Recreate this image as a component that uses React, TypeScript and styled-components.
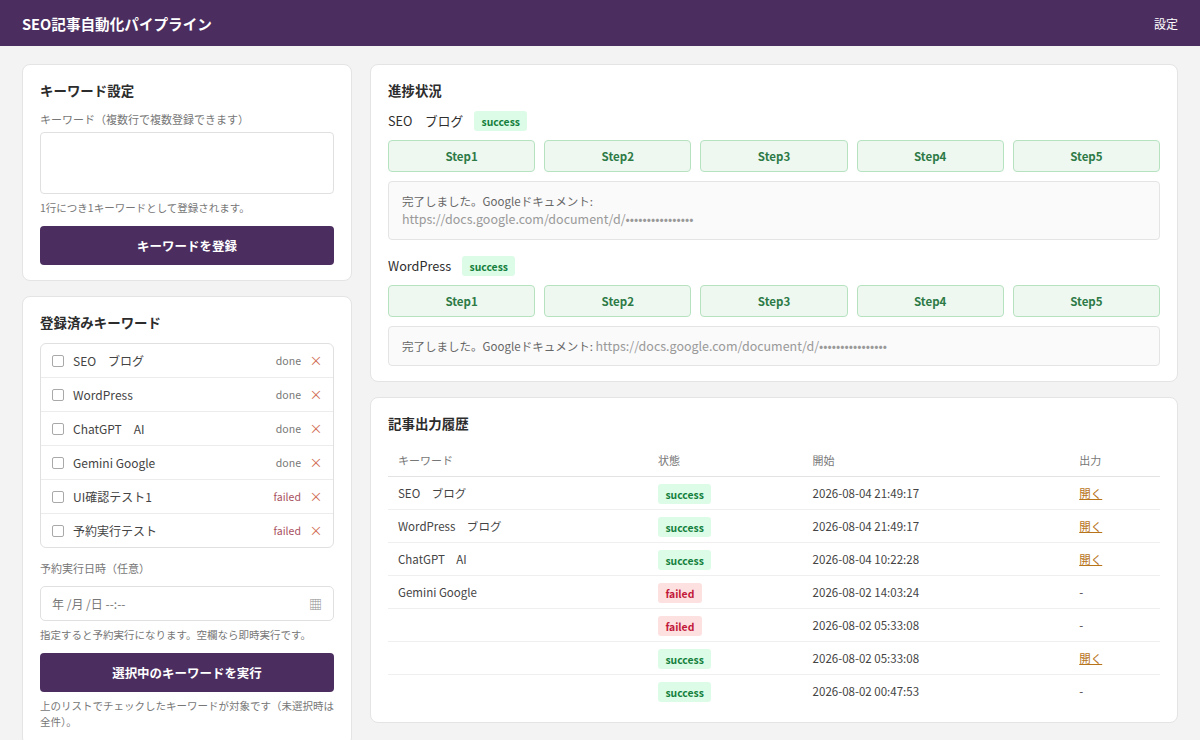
import React from "react";
import styled, { createGlobalStyle } from "styled-components";

const Global = createGlobalStyle`
  html, body { margin: 0; padding: 0; height: 740px; overflow: hidden; background: #f3f3f3; }
  body { font-family: "Noto Sans CJK JP", "Noto Sans", sans-serif; font-size: 12px; color: #333; }
  * { box-sizing: border-box; }
`;

const Header = styled.header`
  height: 46px; background: #4b2e5f; color: #fff; display: flex; align-items: center;
  justify-content: space-between; padding: 0 22px;
`;
const Brand = styled.div`font-size: 14.6px; font-weight: 700;`;
const Settings = styled.a`font-size: 12px; color: #fff;`;
const Layout = styled.main`
  display: grid; grid-template-columns: 330px 808px; gap: 18px; padding: 18px 22px 0; align-items: start;
`;
const Column = styled.div`display: flex; flex-direction: column; gap: 15px;`;
const Card = styled.section`
  background: #fff; border: 1px solid #e4e4e4; border-radius: 8px; padding: 16px 17px 15px;
`;
const Title = styled.h2`margin: 0 0 11px; font-size: 13.44px; line-height: 19px; font-weight: 700; color: #2c2c2c;`;
const Label = styled.div`font-size: 11px; line-height: 16px; color: #777; margin-bottom: 5px;`;
const TextArea = styled.textarea`
  display: block; width: 100%; height: 62px; border: 1px solid #e0e0e0; border-radius: 4px; resize: none; outline: none;
`;
const Help = styled.p`margin: 6px 0 10px; font-size: 10.5px; line-height: 16px; color: #777;`;
const Foot = styled(Help)`margin: 6px 0 0;`;
const Primary = styled.button`
  display: block; width: 100%; height: 39px; border: 0; border-radius: 4px; background: #4b2e5f; color: #fff;
  font: 700 12.48px "Noto Sans CJK JP", sans-serif;
`;
const KeywordList = styled.div`border: 1px solid #e0e0e0; border-radius: 6px; margin-bottom: 12px;`;
const KeywordRow = styled.div`
  height: 34px; display: flex; align-items: center; padding: 0 12px 0 11px; border-top: 1px solid #ececec;
  &:first-child { border-top: 0; height: 33px; }
`;
const Check = styled.input.attrs({ type: "checkbox" })`
  appearance: none; width: 12px; height: 12px; margin: 0 9px 0 0; border: 1px solid #a9a9a9; border-radius: 2px; background: #fff;
`;
const KeywordName = styled.span`flex: 1; color: #444;`;
const KeywordState = styled.span<{ $failed?: boolean }>`
  font-size: 10.56px; color: ${(p) => (p.$failed ? "#a8505e" : "#777")}; margin-right: 10px;
`;
const Remove = styled.button`
  display: flex; align-items: center; justify-content: center; border: 0; background: none; padding: 0 0 2px;
  color: #d0694f; width: 10px; height: 16px; font: 400 13px/14px "Noto Sans CJK JP", sans-serif;
`;
const DateField = styled.div`
  height: 35px; border: 1px solid #e0e0e0; border-radius: 5px; padding: 0 11px 0 11px; display: flex; align-items: center;
  justify-content: space-between; color: #777; font-size: 12px; margin-top: 10px;
`;
const CalendarGlyph = styled.span`font-size: 13px; line-height: 16px; color: #8f8f8f;`;
const StatusLine = styled.div`display: flex; align-items: center; gap: 11px; margin-bottom: 9px; font-size: 12.68px; line-height: 20px; color: #2e2e2e;`;
const Badge = styled.span<{ $failed?: boolean }>`
  display: inline-block; height: 20px; padding: 0 7.4px; border-radius: 3px; font-size: 10.4px; line-height: 21px; font-weight: 700;
  background: ${(p) => (p.$failed ? "#fde1e1" : "#dcfce7")}; color: ${(p) => (p.$failed ? "#c2183a" : "#15803d")};
`;
const Steps = styled.div`display: grid; grid-template-columns: repeat(5, 1fr); gap: 9px; margin-bottom: 9px;`;
const Step = styled.div`
  height: 32px; border: 1px solid #b7e2c0; border-radius: 4px; background: #eef8f1; color: #2d7a46;
  display: flex; align-items: center; justify-content: center; font-size: 11.52px; font-weight: 700;
`;
const Result = styled.div`
  border: 1px solid #e4e4e4; border-radius: 4px; background: #fafafa; padding: 9.8px 13px 8.4px; line-height: 1.6; font-size: 11.52px; color: #666;
  margin-bottom: 16.4px;
  &:last-child { margin-bottom: 0; }
`;
const Url = styled.span`color: #999; font-size: 12.48px;`;
const HistoryTable = styled.table`width: 100%; border-collapse: collapse; table-layout: fixed;`;
const Th = styled.th<{ $w?: number }>`
  width: ${(p) => (p.$w ? `${p.$w}px` : "auto")}; height: 32px; padding: 1px 10px 0; text-align: left; font-size: 11px; font-weight: 400;
  color: #777; border-bottom: 1px solid #e3e3e3;
`;
const Td = styled.td`height: 33px; padding: 0 10px; color: #444; font-size: 11.52px; border-bottom: 1px solid #efefef;`;
const StatusCell = styled(Td)`padding-top: 2px;`;
const LastRow = styled.tr`&:last-child td { border-bottom: 0; }`;
const OpenLink = styled.a`color: #b8741a; text-decoration: underline;`;

const keywords: [string, string][] = [
  ["SEO　ブログ", "done"], ["WordPress", "done"], ["ChatGPT　AI", "done"],
  ["Gemini Google", "done"], ["UI確認テスト1", "failed"], ["予約実行テスト", "failed"],
];
const history: [string, string, string, boolean][] = [
  ["SEO　ブログ", "success", "2026-08-04 21:49:17", true],
  ["WordPress　ブログ", "success", "2026-08-04 21:49:17", true],
  ["ChatGPT　AI", "success", "2026-08-04 10:22:28", true],
  ["Gemini Google", "failed", "2026-08-02 14:03:24", false],
  ["", "failed", "2026-08-02 05:33:08", false],
  ["", "success", "2026-08-02 05:33:08", true],
  ["", "success", "2026-08-02 00:47:53", false],
];
const StepRow = () => (
  <Steps>{[1, 2, 3, 4, 5].map((n) => <Step key={n}>Step{n}</Step>)}</Steps>
);
const URL_TEXT = "https://docs.google.com/document/d/••••••••••••••••";

export default function App() {
  return (
    <>
      <Global />
      <Header><Brand>SEO記事自動化パイプライン</Brand><Settings>設定</Settings></Header>
      <Layout>
        <Column>
          <Card>
            <Title>キーワード設定</Title>
            <Label>キーワード（複数行で複数登録できます）</Label>
            <TextArea />
            <Help>1行につき1キーワードとして登録されます。</Help>
            <Primary>キーワードを登録</Primary>
          </Card>
          <Card>
            <Title>登録済みキーワード</Title>
            <KeywordList>
              {keywords.map(([k, s]) => (
                <KeywordRow key={k}>
                  <Check />
                  <KeywordName>{k}</KeywordName>
                  <KeywordState $failed={s === "failed"}>{s}</KeywordState>
                  <Remove>×</Remove>
                </KeywordRow>
              ))}
            </KeywordList>
            <Label>予約実行日時（任意）</Label>
            <DateField>年 /月 /日 --:--<CalendarGlyph>▦</CalendarGlyph></DateField>
            <Help>指定すると予約実行になります。空欄なら即時実行です。</Help>
            <Primary>選択中のキーワードを実行</Primary>
            <Foot>上のリストでチェックしたキーワードが対象です（未選択時は全件）。</Foot>
          </Card>
        </Column>
        <Column>
          <Card>
            <Title>進捗状況</Title>
            <StatusLine>SEO　ブログ<Badge>success</Badge></StatusLine>
            <StepRow />
            <Result>完了しました。Googleドキュメント:<br /><Url>{URL_TEXT}</Url></Result>
            <StatusLine>WordPress<Badge>success</Badge></StatusLine>
            <StepRow />
            <Result>完了しました。Googleドキュメント: <Url>{URL_TEXT}</Url></Result>
          </Card>
          <Card>
            <Title>記事出力履歴</Title>
            <HistoryTable>
              <thead>
                <tr><Th $w={260}>キーワード</Th><Th $w={154.6}>状態</Th><Th $w={266.6}>開始</Th><Th>出力</Th></tr>
              </thead>
              <tbody>
                {history.map(([k, s, d, open], i) => (
                  <LastRow key={i}>
                    <Td>{k}</Td>
                    <StatusCell><Badge $failed={s === "failed"}>{s}</Badge></StatusCell>
                    <Td>{d}</Td>
                    <Td>{open ? <OpenLink>開く</OpenLink> : "-"}</Td>
                  </LastRow>
                ))}
              </tbody>
            </HistoryTable>
          </Card>
        </Column>
      </Layout>
    </>
  );
}
